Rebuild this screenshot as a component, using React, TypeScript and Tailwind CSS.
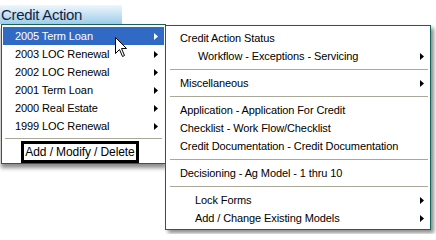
import React from 'react';

type Item =
  | { kind: 'item'; label: string; indent?: number; sub?: boolean }
  | { kind: 'sep' };

const YEARS = [
  { label: '2005 Term Loan', active: true },
  { label: '2003 LOC Renewal' },
  { label: '2002 LOC Renewal' },
  { label: '2001 Term Loan' },
  { label: '2000 Real Estate' },
  { label: '1999 LOC Renewal' },
];

const ACTIONS: Item[] = [
  { kind: 'item', label: 'Credit Action Status' },
  { kind: 'item', label: 'Workflow - Exceptions - Servicing', indent: 32, sub: true },
  { kind: 'sep' },
  { kind: 'item', label: 'Miscellaneous', sub: true },
  { kind: 'sep' },
  { kind: 'item', label: 'Application - Application For Credit' },
  { kind: 'item', label: 'Checklist - Work Flow/Checklist' },
  { kind: 'item', label: 'Credit Documentation - Credit Documentation' },
  { kind: 'sep' },
  { kind: 'item', label: 'Decisioning - Ag Model - 1 thru 10' },
  { kind: 'sep' },
  { kind: 'item', label: 'Lock Forms', indent: 29, sub: true },
  { kind: 'item', label: 'Add / Change Existing Models', indent: 29, sub: true },
];

function Arrow({ white }: { white?: boolean }) {
  return (
    <svg width="4" height="7" viewBox="0 0 4 7" className="shrink-0">
      <polygon points="0,0 4,3.5 0,7" fill={white ? '#ffffff' : '#000000'} />
    </svg>
  );
}

function Cursor() {
  return (
    <svg
      width="13"
      height="21"
      viewBox="0 0 13 21"
      className="absolute left-[115px] top-[37px]"
    >
      <path
        d="M0.5 0.5 L0.5 16.5 L4.5 12.5 L7.5 19.5 L9.5 18.5 L6.5 11.5 L11.5 11.5 Z"
        fill="#ffffff"
        stroke="#000000"
        strokeWidth="1"
        strokeLinejoin="miter"
      />
    </svg>
  );
}

export default function App() {
  return (
    <div
      className="relative h-[234px] w-[436px] overflow-hidden bg-white text-[11px] tracking-[-0.1px] text-black"
      style={{ fontFamily: '"Liberation Sans", Arial, sans-serif' }}
    >
      <div className="mt-[5px] h-[19px] w-[122px] bg-gradient-to-b from-[#eef7fd] to-[#9ccdea] pl-[1px] text-[15px] leading-[19px] tracking-[-0.3px] text-[#161f42]">
        Credit Action
      </div>

      <div className="flex items-start">
        {/* year menu */}
        <div className="ml-px flex h-[140px] w-[165px] flex-col border border-[#17625a] bg-white px-px pt-[2px] shadow-[0_4px_4px_rgba(0,0,0,0.45)]">
          {YEARS.map((y) => (
            <div
              key={y.label}
              className={`flex h-[18px] items-center justify-between pl-[12px] pr-[6px] ${
                y.active ? 'bg-[#316ac5] text-white' : ''
              }`}
            >
              <span>{y.label}</span>
              <Arrow white={y.active} />
            </div>
          ))}
          <div className="h-[6px] pt-[3px]">
            <div className="mx-[2px] h-px bg-[#aca899]" />
          </div>
          <div className="ml-[18px] flex h-[22px] w-[118px] items-center justify-center border-[3px] border-black text-[12px]">
            Add / Modify / Delete
          </div>
        </div>

        {/* action submenu */}
        <div className="-ml-px mt-px flex h-[205px] w-[266px] flex-col border border-[#17625a] bg-white pt-[3px] shadow-[3px_3px_4px_rgba(0,0,0,0.45)]">
          {ACTIONS.map((a, i) =>
            a.kind === 'sep' ? (
              <div key={i} className="h-[9px] pt-[4px]">
                <div className="ml-[4px] mr-[2px] h-px bg-[#aca899]" />
              </div>
            ) : (
              <div
                key={i}
                className="flex h-[18px] items-center justify-between pr-[6px]"
                style={{ paddingLeft: a.indent ?? 14 }}
              >
                <span>{a.label}</span>
                {a.sub && <Arrow />}
              </div>
            ),
          )}
        </div>
      </div>

      <Cursor />
    </div>
  );
}
